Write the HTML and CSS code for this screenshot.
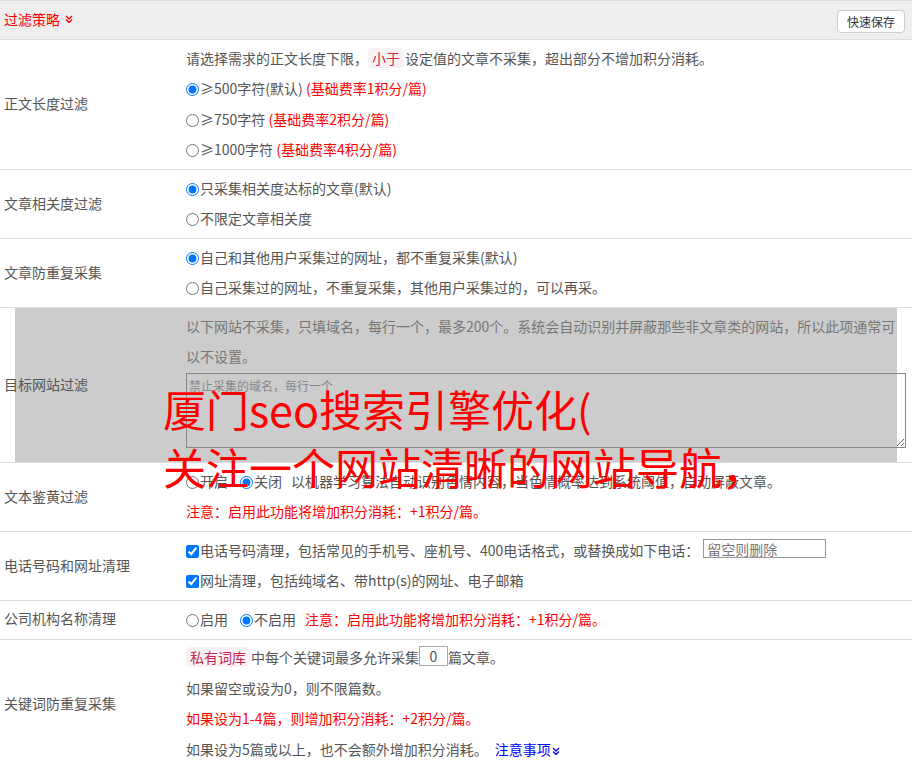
FILE: index.html
```html
<!DOCTYPE html>
<html lang="zh-CN">
<head>
<meta charset="utf-8">
<title>过滤策略</title>
<link rel="stylesheet" href="styles.css">
</head>
<body>
<div class="panel">
  <div class="panel-head">
    <span class="title">过滤策略<svg class="chev" viewBox="0 0 8 8" width="8" height="8"><polyline points="1,1 4,4 7,1"/><polyline points="1,4.5 4,7.5 7,4.5"/></svg></span>
    <button class="save" type="button">快速保存</button>
  </div>

  <div class="row">
    <div class="label">正文长度过滤</div>
    <div class="content">
      <div>请选择需求的正文长度下限，<span class="tag">小于</span>设定值的文章不采集，超出部分不增加积分消耗。</div>
      <div><label><input type="radio" name="len" checked>≥500字符(默认)</label> <span class="red">(基础费率1积分/篇)</span></div>
      <div><label><input type="radio" name="len">≥750字符</label> <span class="red">(基础费率2积分/篇)</span></div>
      <div><label><input type="radio" name="len">≥1000字符</label> <span class="red">(基础费率4积分/篇)</span></div>
    </div>
  </div>

  <div class="row">
    <div class="label">文章相关度过滤</div>
    <div class="content">
      <div><label><input type="radio" name="rel" checked>只采集相关度达标的文章(默认)</label></div>
      <div><label><input type="radio" name="rel">不限定文章相关度</label></div>
    </div>
  </div>

  <div class="row">
    <div class="label">文章防重复采集</div>
    <div class="content">
      <div><label><input type="radio" name="dup" checked>自己和其他用户采集过的网址，都不重复采集(默认)</label></div>
      <div><label><input type="radio" name="dup">自己采集过的网址，不重复采集，其他用户采集过的，可以再采。</label></div>
    </div>
  </div>

  <div class="row row-hl">
    <div class="label">目标网站过滤</div>
    <div class="content">
      <div class="help">以下网站不采集，只填域名，每行一个，最多200个。系统会自动识别并屏蔽那些非文章类的网站，所以此项通常可以不设置。</div>
      <textarea class="domains" placeholder="禁止采集的域名，每行一个"></textarea>
    </div>
  </div>

  <div class="row">
    <div class="label">文本鉴黄过滤</div>
    <div class="content">
      <div><label class="opt"><input type="radio" name="porn">开启</label><label class="opt last"><input type="radio" name="porn" checked>关闭</label>以机器学习算法自动识别色情内容，当色情概率达到系统阈值，自动屏蔽文章。</div>
      <div class="red">注意：启用此功能将增加积分消耗：+1积分/篇。</div>
    </div>
  </div>

  <div class="row">
    <div class="label">电话号码和网址清理</div>
    <div class="content">
      <div><label><input type="checkbox" checked>电话号码清理，包括常见的手机号、座机号、400电话格式，或替换成如下电话：</label><input class="phone" type="text" placeholder="留空则删除"></div>
      <div><label><input type="checkbox" checked>网址清理，包括纯域名、带http(s)的网址、电子邮箱</label></div>
    </div>
  </div>

  <div class="row">
    <div class="label">公司机构名称清理</div>
    <div class="content">
      <div><label class="opt"><input type="radio" name="org">启用</label><label class="opt last"><input type="radio" name="org" checked>不启用</label><span class="red">注意：启用此功能将增加积分消耗：+1积分/篇。</span></div>
    </div>
  </div>

  <div class="row">
    <div class="label">关键词防重复采集</div>
    <div class="content">
      <div><span class="tag">私有词库</span>中每个关键词最多允许采集<input class="num" type="text" value="0">篇文章。</div>
      <div>如果留空或设为0，则不限篇数。</div>
      <div class="red">如果设为1-4篇，则增加积分消耗：+2积分/篇。</div>
      <div>如果设为5篇或以上，也不会额外增加积分消耗。<a class="more" href="#">注意事项<svg class="chev blue" viewBox="0 0 8 8" width="8" height="8"><polyline points="1,1 4,4 7,1"/><polyline points="1,4.5 4,7.5 7,4.5"/></svg></a></div>
    </div>
  </div>
</div>

<div class="overlay-title">厦门seo搜索引擎优化(<br>关注一个网站清晰的网站导航，</div>
</body>
</html>
```

FILE: styles.css
```css
html, body {
  margin: 0;
  padding: 0;
  background: #fff;
}

body {
  font-family: "Microsoft YaHei", "Noto Sans CJK SC", "Noto Sans", sans-serif;
  font-size: 14px;
  color: #555;
  position: relative;
}

.panel {
  width: 912px;
}

.panel-head {
  height: 38px;
  border-top: 1px solid #ddd;
  border-bottom: 1px solid #ddd;
  background: #eee;
  display: flex;
  align-items: center;
  justify-content: space-between;
  padding: 0 7px 0 4px;
}

.title {
  color: #f00;
  font-size: 14px;
  display: flex;
  align-items: center;
  margin-top: -2px;
}

.chev {
  fill: none;
  stroke: #f00;
  stroke-width: 1.3;
  margin-left: 5px;
}

.chev.blue {
  stroke: #00f;
  margin-left: 1px;
}

.save {
  font-family: inherit;
  font-size: 12px;
  color: #333;
  background: #fff;
  border: 1px solid #ccc;
  border-radius: 4px;
  height: 23px;
  padding: 0 9px;
  line-height: 21px;
  margin-top: 2px;
}

.row {
  display: grid;
  grid-template-columns: 186px 1fr;
  border-bottom: 1px solid #ddd;
  position: relative;
  z-index: 0;
}

.row-hl::before {
  content: "";
  position: absolute;
  left: 15px;
  right: 15px;
  top: 0;
  bottom: 0;
  background: #ccc;
  z-index: -1;
}

.label {
  display: flex;
  align-items: center;
  padding-left: 4px;
  padding-bottom: 3px;
  color: #555;
}

.content {
  padding: 2.5px 22px 4.5px 0;
  line-height: 30.5px;
}

.help {
  color: #777;
}

.red {
  color: #f00;
}

.tag {
  background: #f9f2f4;
  color: #c7254e;
  border-radius: 4px;
  padding: 0 4px;
  margin-right: 1px;
}

input[type="radio"],
input[type="checkbox"] {
  width: 13px;
  height: 13px;
  margin: 0 1px 0 0;
  vertical-align: -2px;
}

.opt {
  margin-right: 12px;
}

.opt.last {
  margin-right: 9px;
}

.domains {
  display: block;
  box-sizing: border-box;
  width: 720px;
  height: 75px;
  margin: 1px 0 10px;
  padding: 3px 2px;
  border: 1px solid #888;
  background: transparent;
  font-family: inherit;
  font-size: 12px;
  line-height: 18px;
  color: #555;
}

.domains::placeholder {
  color: #888;
}

.phone {
  box-sizing: border-box;
  width: 123px;
  height: 19px;
  margin-left: 4px;
  border: 1px solid #999;
  padding: 0 3px;
  font-family: inherit;
  font-size: 14px;
  vertical-align: 1px;
}

.phone::placeholder {
  color: #777;
}

.num {
  box-sizing: border-box;
  width: 29px;
  height: 20px;
  border: 1px solid #aaa;
  padding: 0;
  text-align: center;
  font-family: inherit;
  font-size: 14px;
  color: #555;
  vertical-align: 1px;
}

.more {
  color: #00f;
  text-decoration: none;
  margin-left: 7px;
}

.overlay-title {
  position: absolute;
  left: 163px;
  top: 379px;
  color: #f00;
  font-size: 43px;
  line-height: 58px;
  white-space: nowrap;
  pointer-events: none;
}
```
